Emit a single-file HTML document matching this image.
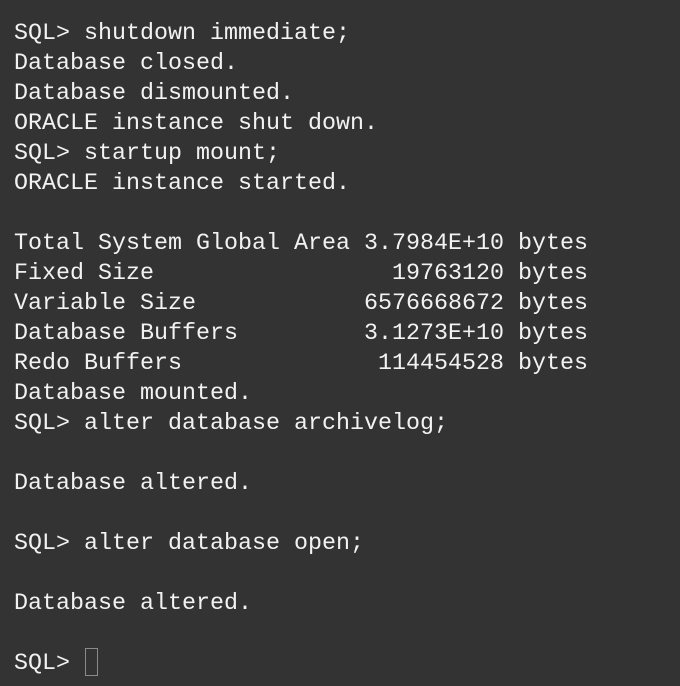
<!DOCTYPE html>
<html><head><style>
html,body{margin:0;padding:0;background:#333333;width:680px;height:686px;overflow:hidden}
pre{margin:0;padding:19px 0 0 14px;font-family:"Liberation Mono",monospace;font-size:23.33px;line-height:30px;color:#f2f2f2}
.c{position:absolute;left:85px;top:648px;width:11px;height:26px;border:1px solid #8a8a8a}
</style></head><body><pre>SQL&gt; shutdown immediate;
Database closed.
Database dismounted.
ORACLE instance shut down.
SQL&gt; startup mount;
ORACLE instance started.

Total System Global Area 3.7984E+10 bytes
Fixed Size                 19763120 bytes
Variable Size            6576668672 bytes
Database Buffers         3.1273E+10 bytes
Redo Buffers              114454528 bytes
Database mounted.
SQL&gt; alter database archivelog;

Database altered.

SQL&gt; alter database open;

Database altered.

SQL&gt; </pre><div class="c"></div></body></html>
